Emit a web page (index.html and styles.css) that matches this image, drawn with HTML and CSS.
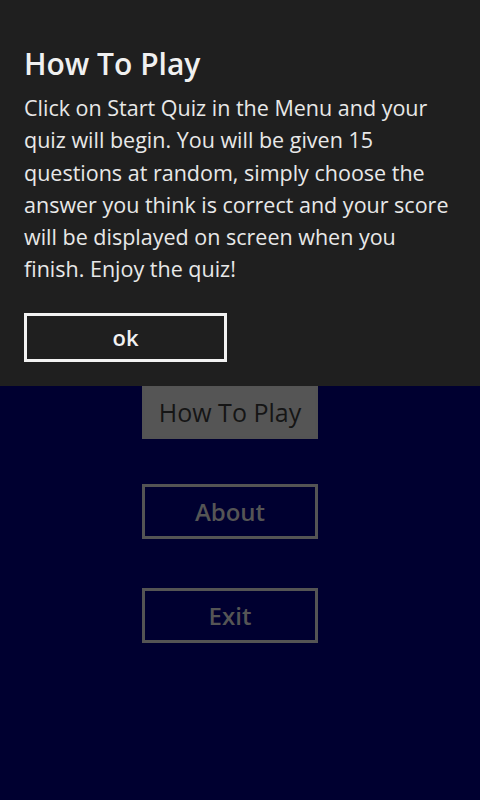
FILE: index.html
```html
<!DOCTYPE html>
<html>
<head>
<meta charset="utf-8">
<link rel="stylesheet" href="styles.css">
</head>
<body>
<main class="menu">
  <div class="menu-btn menu-btn-active">How To Play</div>
  <div class="menu-btn menu-btn-about">About</div>
  <div class="menu-btn">Exit</div>
</main>
<section class="dialog">
  <h1 class="dialog-title">How To Play</h1>
  <p class="dialog-text">Click on Start Quiz in the Menu and your<br>quiz will begin. You will be given 15<br>questions at random, simply choose the<br>answer you think is correct and your score<br>will be displayed on screen when you<br>finish. Enjoy the quiz!</p>
  <div class="dialog-ok">ok</div>
</section>
</body>
</html>
```

FILE: styles.css
```css
html, body {
  margin: 0;
  padding: 0;
  width: 480px;
  height: 800px;
  background: #000030;
  font-family: "Open Sans", "Noto Sans", sans-serif;
  overflow: hidden;
}
body {
  position: relative;
}
.menu {
  display: flex;
  flex-direction: column;
  align-items: flex-start;
  padding-top: 384px;
  padding-left: 142px;
}
.menu-btn {
  box-sizing: border-box;
  width: 176px;
  height: 55px;
  margin-bottom: 49px;
  border: 3px solid #545454;
  color: #555555;
  font-size: 24px;
  font-weight: 600;
  display: flex;
  align-items: center;
  justify-content: center;
}
.menu-btn-active {
  background: #555555;
  color: #151515;
  font-weight: 400;
  font-size: 25px;
  padding-top: 0;
  margin-bottom: 45px;
}
.dialog {
  position: absolute;
  left: 0;
  top: 0;
  width: 480px;
  height: 386px;
  box-sizing: border-box;
  background: #1f1f1f;
  padding: 44px 24px 0 24px;
  color: #f0f0f0;
}
.dialog-title {
  margin: 0;
  font-size: 30px;
  font-weight: 600;
  line-height: 40px;
}
.dialog-text {
  margin: 8px 0 0 0;
  font-size: 21.5px;
  line-height: 32.3px;
  color: #e8e8e8;
}
.dialog-ok {
  box-sizing: border-box;
  width: 203px;
  height: 49px;
  margin-top: 27px;
  border: 3px solid #f2f2f2;
  display: flex;
  align-items: center;
  justify-content: center;
  font-size: 22px;
  font-weight: 600;
  color: #f2f2f2;
}
```
